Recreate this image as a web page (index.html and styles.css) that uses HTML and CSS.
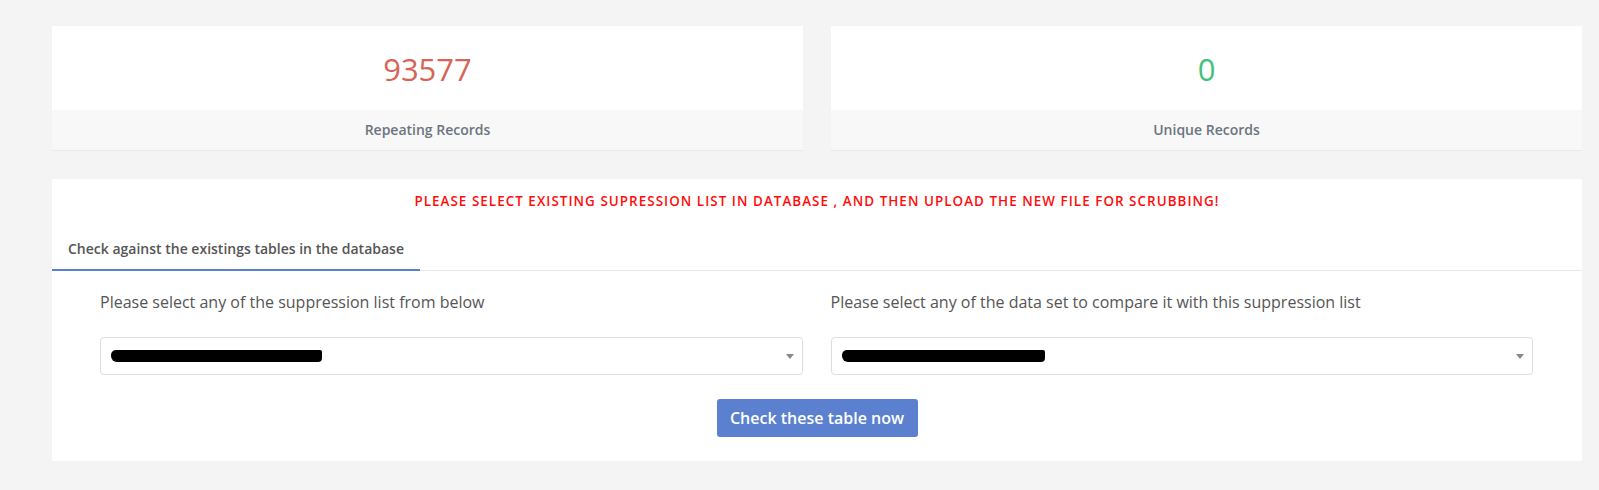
FILE: index.html
```html
<!DOCTYPE html>
<html lang="en">
<head>
  <meta charset="UTF-8" />
  <title>Scrub Records</title>
  <link rel="stylesheet" href="styles.css">
</head>
<body>

<div class="page">
  <div class="stats">
    <div class="stat-card">
      <div class="stat-value repeat">93577</div>
      <div class="stat-label">Repeating Records</div>
    </div>
    <div class="stat-card">
      <div class="stat-value unique">0</div>
      <div class="stat-label">Unique Records</div>
    </div>
  </div>

  <div class="panel">
    <div class="notice">PLEASE SELECT EXISTING SUPRESSION LIST IN DATABASE , AND THEN UPLOAD THE NEW FILE FOR SCRUBBING!</div>

    <div class="tabs">
      <div class="tab active">Check against the existings tables in the database</div>
    </div>

    <div class="form-row">
      <div class="form-col">
        <label class="field-label">Please select any of the suppression list from below</label>
        <div class="select-box">
          <span class="redacted wide"></span>
          <span class="caret"></span>
        </div>
      </div>
      <div class="form-col">
        <label class="field-label">Please select any of the data set to compare it with this suppression list</label>
        <div class="select-box">
          <span class="redacted"></span>
          <span class="caret"></span>
        </div>
      </div>
    </div>

    <div class="actions">
      <button class="btn-check">Check these table now</button>
    </div>
  </div>
</div>

</body>
</html>
```

FILE: styles.css
```css
body {
  margin: 0;
  background: #f4f4f4;
  font-family: "Open Sans", "Noto Sans", sans-serif;
  color: #555;
}

.page {
  padding: 26px 17px 28px 52px;
}

.stats {
  display: flex;
  gap: 28px;
}

.stat-card {
  flex: 1;
  background: #fff;
  box-shadow: 0 1px 1px rgba(0, 0, 0, 0.04);
}

.stat-value {
  height: 84px;
  display: flex;
  align-items: center;
  justify-content: center;
  font-size: 31px;
  padding-top: 2px;
  box-sizing: border-box;
}

.stat-value.repeat {
  color: #d66557;
}

.stat-value.unique {
  color: #45c27a;
}

.stat-label {
  height: 40px;
  background: #f8f8f8;
  display: flex;
  align-items: center;
  justify-content: center;
  font-size: 14px;
  font-weight: 600;
  color: #6c7480;
  padding-bottom: 1px;
  box-sizing: border-box;
}

.panel {
  margin-top: 29px;
  background: #fff;
  padding-bottom: 24px;
}

.notice {
  text-align: center;
  color: #ff0d0d;
  font-size: 13.4px;
  font-weight: 600;
  letter-spacing: 1.05px;
  padding-top: 13px;
  height: 32px;
}

.tabs {
  display: flex;
  border-bottom: 1px solid #e8e8e8;
  margin-top: 15px;
}

.tab {
  font-size: 14px;
  font-weight: 600;
  color: #555;
  padding: 0 16px 11px 16px;
  width: 368px;
  box-sizing: border-box;
}

.tab.active {
  border-bottom: 2px solid #5b80d0;
  margin-bottom: -1px;
}

.form-row {
  display: flex;
  gap: 28px;
  padding: 20px 49px 0 48px;
}

.form-col {
  flex: 1;
}

.field-label {
  display: block;
  font-size: 16px;
  color: #555;
  margin-bottom: 24px;
}

.select-box {
  height: 38px;
  border: 1px solid #ddd;
  border-radius: 4px;
  box-sizing: border-box;
  display: flex;
  align-items: center;
  justify-content: space-between;
  padding: 0 8px 0 10px;
}

.redacted {
  display: block;
  width: 203px;
  height: 12px;
  background: #000;
  border-radius: 5px 2px 4px 6px;
}

.redacted.wide {
  width: 211px;
}

.caret {
  width: 0;
  height: 0;
  border-left: 4px solid transparent;
  border-right: 4px solid transparent;
  border-top: 5px solid #888;
}

.actions {
  display: flex;
  justify-content: center;
  padding-top: 24px;
}

.btn-check {
  font-family: "Open Sans", sans-serif;
  font-size: 16px;
  font-weight: 600;
  color: #fff;
  background: #5b80d0;
  border: none;
  border-radius: 3px;
  width: 201px;
  height: 38px;
  padding: 0;
}
```
